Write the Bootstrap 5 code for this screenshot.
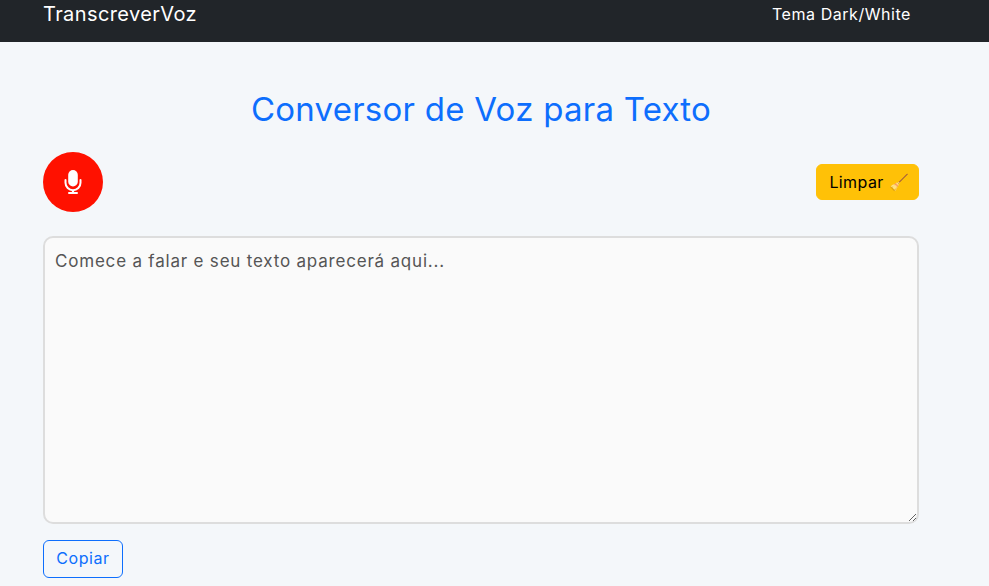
<!DOCTYPE html>
<html lang="pt-BR">
<head>
    <meta charset="UTF-8">
    <meta name="viewport" content="width=device-width, initial-scale=1.0">
    <title>TranscreverVoz</title>
    <link href="https://cdn.jsdelivr.net/npm/bootstrap@5.3.0/dist/css/bootstrap.min.css" rel="stylesheet">
    <style>
        html, body { height: 586px; overflow: hidden; }
        body {
            background: #f4f7fa;
            font-family: Inter, "Noto Sans", sans-serif;
        }
        .topo { height: 42px; background: #212529; padding: 0 78px 15px 43px; }
        .topo-marca { color: #fff; font-size: 20px; letter-spacing: .4px; line-height: 30px; }
        .topo-link { color: #fff; font-size: 16px; letter-spacing: .55px; line-height: 24px; text-decoration: none; }
        .conteudo { width: 876px; margin-left: 43px; }
        .titulo { color: #0d6efd; font-size: 33px; letter-spacing: .25px; font-weight: 400; line-height: 48px; margin: 43px 0 19px; }
        .btn-mic {
            width: 60px; height: 60px; border-radius: 50%;
            background: #ff1100; border: 0; padding: 0;
        }
        .btn-limpar { font-size: 16px; letter-spacing: .4px; height: 36px; padding: 0 9px 0 12px; color: #000; white-space: nowrap; }
        .caixa {
            height: 288px; margin-top: 24px; background: #fafafa;
            border: 2px solid #ddd; border-radius: 10px;
            padding: 11px 10px 10px; font-size: 17px; letter-spacing: .8px; color: #333;
        }
        .caixa::placeholder { color: #555; opacity: 1; }
        .btn-copiar { font-size: 16px; letter-spacing: .55px; width: 80px; height: 38px; padding: 0 0 2px; margin-top: 16px; display: block; }
    </style>
</head>
<body>
    <nav class="topo d-flex justify-content-between align-items-center">
        <span class="topo-marca">TranscreverVoz</span>
        <a href="#" class="topo-link">Tema Dark/White</a>
    </nav>

    <main class="conteudo">
        <h1 class="titulo text-center">Conversor de Voz para Texto</h1>

        <div class="d-flex justify-content-between align-items-center">
            <button class="btn-mic d-flex align-items-center justify-content-center" type="button" aria-label="Microfone">
                <svg width="18" height="24" viewBox="0 0 18 24" fill="none">
                    <rect x="4.2" y="0" width="9.6" height="16.5" rx="4.8" fill="#fff"/>
                    <path d="M1.5 10v2.7a7.5 7.5 0 0 0 15 0V10" stroke="#fff" stroke-width="2" stroke-linecap="round"/>
                    <path d="M9 20v2.5" stroke="#fff" stroke-width="2.2"/>
                    <path d="M5 23h8" stroke="#fff" stroke-width="2" stroke-linecap="round"/>
                </svg>
            </button>
            <button class="btn btn-warning btn-limpar" type="button">Limpar 🧹</button>
        </div>

        <textarea class="caixa form-control" placeholder="Comece a falar e seu texto aparecerá aqui..."></textarea>

        <button class="btn btn-outline-primary btn-copiar" type="button">Copiar</button>
    </main>

    <script src="https://cdn.jsdelivr.net/npm/bootstrap@5.3.0/dist/js/bootstrap.bundle.min.js"></script>
</body>
</html>
